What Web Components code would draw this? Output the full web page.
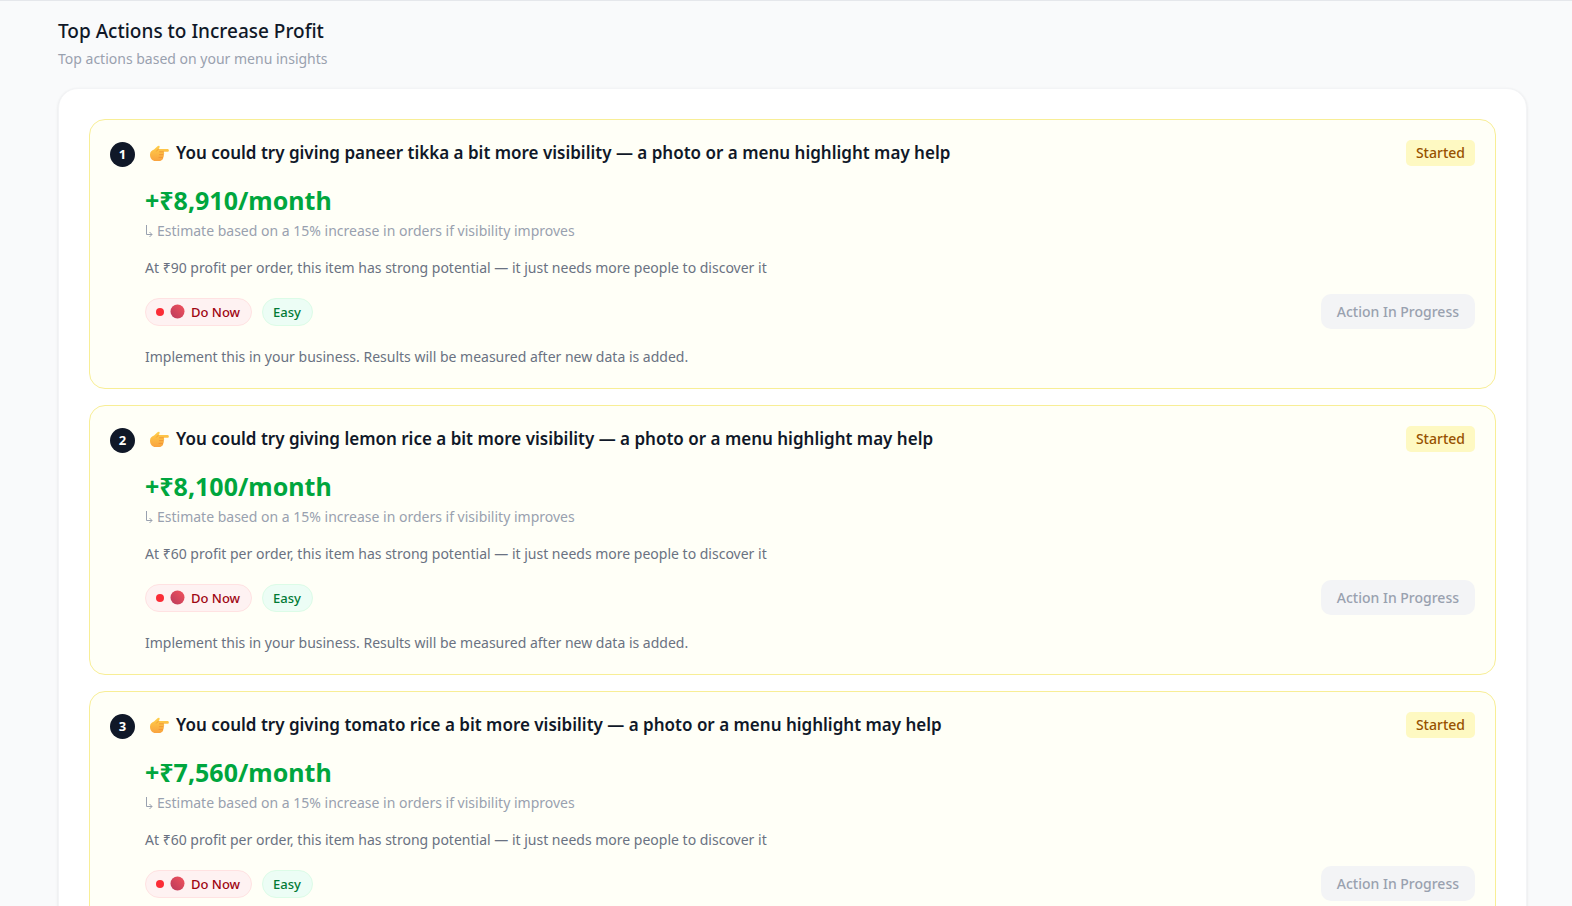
<!DOCTYPE html>
<html lang="en">
<head>
<meta charset="UTF-8">
<meta name="viewport" content="width=device-width, initial-scale=1">
<title>Top Actions to Increase Profit</title>
<style>
  body {
    margin: 0;
    background: #f9fafb;
    color: #101828;
    font-family: "Noto Sans", "Open Sans", sans-serif;
  }
</style>
</head>
<body>
<action-section heading="Top Actions to Increase Profit" subtitle="Top actions based on your menu insights">
  <action-card rank="1" amount="+₹8,910/month">
    You could try giving paneer tikka a bit more visibility — a photo or a menu highlight may help
    <span slot="reason">At ₹90 profit per order, this item has strong potential — it just needs more people to discover it</span>
  </action-card>
  <action-card rank="2" amount="+₹8,100/month">
    You could try giving lemon rice a bit more visibility — a photo or a menu highlight may help
    <span slot="reason">At ₹60 profit per order, this item has strong potential — it just needs more people to discover it</span>
  </action-card>
  <action-card rank="3" amount="+₹7,560/month">
    You could try giving tomato rice a bit more visibility — a photo or a menu highlight may help
    <span slot="reason">At ₹60 profit per order, this item has strong potential — it just needs more people to discover it</span>
  </action-card>
</action-section>

<script>
class ActionSection extends HTMLElement {
  connectedCallback() {
    const shadowRoot = this.attachShadow({ mode: 'open' });
    const heading = this.getAttribute('heading');
    const subtitle = this.getAttribute('subtitle');

    shadowRoot.innerHTML = `
      <style>
        :host {
          display: block;
          border-top: 1px solid #e5e7eb;
          padding: 16px 45px 40px 58px;
        }
        h2 {
          margin: 0;
          font-size: 19px;
          font-weight: 500;
          line-height: 28px;
        }
        p {
          margin: 0 0 16px;
          color: #99a1af;
          font-size: 14px;
          line-height: 27px;
        }
        .list {
          display: flex;
          flex-direction: column;
          gap: 16px;
          padding: 30px;
          background: #fff;
          border: 1px solid #f3f4f6;
          border-radius: 20px;
          box-shadow: 0 1px 3px rgba(0, 0, 0, 0.1);
        }
      </style>
      <h2>${heading}</h2>
      <p>${subtitle}</p>
      <div class="list"><slot></slot></div>
    `;
  }
}

class ActionBadge extends HTMLElement {
  connectedCallback() {
    const shadowRoot = this.attachShadow({ mode: 'open' });

    shadowRoot.innerHTML = `
      <style>
        :host {
          display: inline-flex;
          align-items: center;
          gap: 6px;
          padding: 0 11px 0 10px;
          border: 1px solid;
          border-radius: 14px;
          font-size: 13px;
          font-weight: 500;
          line-height: 26px;
          white-space: nowrap;
        }
        :host([tone="red"]) {
          color: #9f0712;
          background: #fef2f2;
          border-color: #ffe2e2;
        }
        :host([tone="green"]) {
          color: #017a35;
          background: #ecfdf5;
          border-color: #dcfce7;
        }
      </style>
      <slot></slot>
    `;
  }
}

class ActionCard extends HTMLElement {
  connectedCallback() {
    const shadowRoot = this.attachShadow({ mode: 'open' });
    const rank = this.getAttribute('rank');
    const amount = this.getAttribute('amount');

    shadowRoot.innerHTML = `
      <style>
        :host {
          display: flex;
          gap: 10px;
          padding: 20px;
          background: #fffff7;
          border: 1px solid #f8ee96;
          border-radius: 16px;
        }
        .rank {
          flex: none;
          width: 25px;
          height: 25px;
          margin-top: 2px;
          border-radius: 50%;
          background: #101828;
          color: #fff;
          font-size: 13px;
          font-weight: 700;
          line-height: 25px;
          text-align: center;
        }
        .body {
          flex: 1;
          min-width: 0;
        }
        header, footer {
          display: flex;
          align-items: center;
          justify-content: space-between;
          gap: 16px;
        }
        h3 {
          display: flex;
          align-items: center;
          gap: 7px;
          margin: 0;
          padding-left: 5px;
          font-size: 17px;
          font-weight: 600;
          line-height: 26px;
        }
        svg {
          flex: none;
          display: block;
        }
        .status {
          padding: 0 10px;
          border-radius: 5px;
          background: #fef9c2;
          color: #975200;
          font-size: 14px;
          font-weight: 500;
          line-height: 26px;
        }
        p {
          margin: 0;
          color: #6a7282;
          font-size: 14px;
          line-height: 22px;
        }
        .amount {
          margin-top: 16px;
          color: #00a63e;
          font-size: 25px;
          font-weight: 700;
          line-height: 36px;
        }
        .estimate {
          display: flex;
          align-items: center;
          gap: 4px;
          margin-top: 2px;
          color: #99a1af;
        }
        .reason {
          margin: 15px 0;
        }
        .badges {
          display: flex;
          gap: 10px;
        }
        button {
          padding: 0 16px;
          border: 0;
          border-radius: 10px;
          background: #f3f4f6;
          color: #99a1af;
          font: 500 14px/35px "Noto Sans", "Open Sans", sans-serif;
        }
        .note {
          margin-top: 17px;
        }
      </style>
      <div class="rank">${rank}</div>
      <div class="body">
        <header>
          <h3>
            <svg width="19" height="17" viewBox="0 0 19 17" aria-hidden="true">
              <defs>
                <linearGradient id="skin" x1="0" y1="0" x2="0" y2="1">
                  <stop offset="0" stop-color="#ffd04a"/>
                  <stop offset="1" stop-color="#f9a33f"/>
                </linearGradient>
              </defs>
              <path fill="url(#skin)" d="M0 9.500C0 6.500 2 5.500 4 4.500L7.500 1.200C8.700 0 10.200 1 9.500 2.400L8.500 4H17.500C19.300 4 19.300 6.800 17.500 6.800H13.500C14.600 7.600 14.300 9.200 13.400 9.600C14.200 10.500 13.900 12 12.900 12.400C13.500 13.500 12.900 14.800 11.700 15C11 16.300 9.500 16 8 16H5.500C2.300 16 0 13.500 0 9.500Z"/>
              <path fill="none" stroke="#ee8e32" stroke-width=".7" stroke-linecap="round" d="M13.500 6.800H9.500M13.400 9.600H9.500M12.900 12.400H9M8.500 4L6.500 6.200"/>
            </svg>
            <span><slot></slot></span>
          </h3>
          <span class="status">Started</span>
        </header>
        <p class="amount">${amount}</p>
        <p class="estimate">
          <svg width="8" height="14" viewBox="0 0 8 14" aria-hidden="true">
            <path fill="none" stroke="currentColor" d="M1.500 1V10.500H7M4.500 8L7 10.500L4.500 13"/>
          </svg>
          <span>Estimate based on a 15% increase in orders if visibility improves</span>
        </p>
        <p class="reason"><slot name="reason"></slot></p>
        <footer>
          <div class="badges">
            <action-badge tone="red">
              <svg width="8" height="8" viewBox="0 0 8 8" aria-hidden="true"><circle cx="4" cy="4" r="4" fill="#fb2c36"/></svg>
              <svg width="15" height="15" viewBox="0 0 15 15" aria-hidden="true">
                <defs>
                  <linearGradient id="ball" x1="1" y1="0" x2="0" y2="1">
                    <stop offset="0" stop-color="#f2525c"/>
                    <stop offset="1" stop-color="#b93a5c"/>
                  </linearGradient>
                </defs>
                <circle cx="7.500" cy="7.500" r="7" fill="url(#ball)"/>
              </svg>
              Do Now
            </action-badge>
            <action-badge tone="green">Easy</action-badge>
          </div>
          <button type="button" disabled>Action In Progress</button>
        </footer>
        <p class="note">Implement this in your business. Results will be measured after new data is added.</p>
      </div>
    `;
  }
}

customElements.define('action-badge', ActionBadge);
customElements.define('action-card', ActionCard);
customElements.define('action-section', ActionSection);
</script>
</body>
</html>
